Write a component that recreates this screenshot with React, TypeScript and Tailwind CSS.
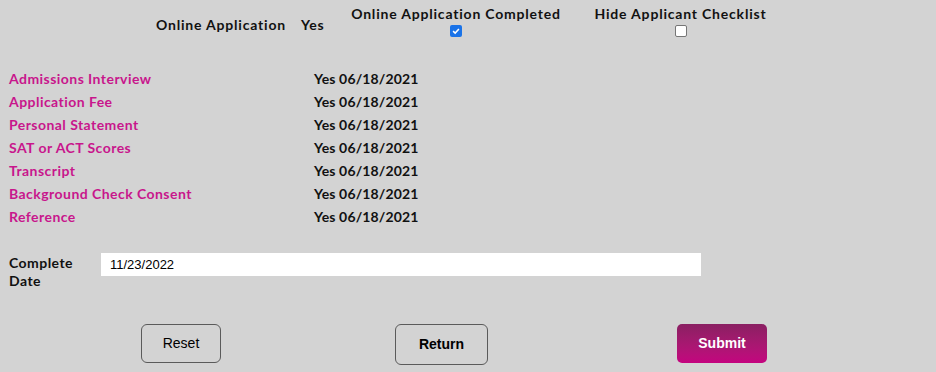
import React from "react";

const rows = [
  "Admissions Interview",
  "Application Fee",
  "Personal Statement",
  "SAT or ACT Scores",
  "Transcript",
  "Background Check Consent",
  "Reference",
];

const gothic = { fontFamily: '"URW Gothic", "Century Gothic", "Lato", "DejaVu Sans", sans-serif' };

function Check({ checked }: { checked: boolean }) {
  return checked ? (
    <span className="inline-flex h-[12px] w-[12px] items-center justify-center rounded-[2px] bg-[#1a73e8]">
      <svg viewBox="0 0 12 12" className="h-[10px] w-[10px]">
        <path d="M2.5 6.2 L5 8.5 L9.5 3.5" fill="none" stroke="white" strokeWidth="1.8" />
      </svg>
    </span>
  ) : (
    <span className="inline-block h-[12px] w-[12px] rounded-[2px] border border-[#767676] bg-white" />
  );
}

export default function App() {
  return (
    <div className="h-[372px] w-[936px] overflow-hidden bg-[#d3d3d3] text-[14px] font-bold tracking-[0.45px] text-[#111]" style={gothic}>
      <div className="flex h-[67px] items-start pt-[4px] tracking-[0.8px]">
        <div className="ml-[156px] mt-[10px] w-[145px] whitespace-nowrap">Online Application</div>
        <div className="mt-[10px] w-[48px]">Yes</div>
        <div className="flex w-[214px] flex-col items-center whitespace-nowrap">
          <div className="leading-[20px]">Online Application Completed</div>
          <div className="mt-[1px] flex"><Check checked /></div>
        </div>
        <div className="ml-[31px] flex w-[173px] flex-col items-center whitespace-nowrap">
          <div className="leading-[20px]">Hide Applicant Checklist</div>
          <div className="mt-[1px] flex"><Check checked={false} /></div>
        </div>
      </div>
      <div className="flex flex-col">
        {rows.map((r) => (
          <div key={r} className="flex h-[23px] items-center">
            <div className="ml-[9px] w-[305px] text-[#c8168c]">{r}</div>
            <div className="tracking-[0.15px]">Yes 06/18/2021</div>
          </div>
        ))}
      </div>
      <div className="mt-[25px] flex items-start">
        <div className="ml-[9px] mt-[1px] w-[92px] leading-[18px]">
          Complete
          <br />
          Date
        </div>
        <div className="flex h-[23px] w-[600px] items-center bg-white pl-[9px] text-[13px] font-normal tracking-normal text-black" style={{ fontFamily: '"Liberation Sans", Arial, sans-serif' }}>
          11/23/2022
        </div>
      </div>
      <div className="mt-[34px] flex items-start tracking-normal" style={{ fontFamily: '"Liberation Sans", Arial, sans-serif' }}>
        <button className="ml-[141px] h-[39px] w-[80px] rounded-[6px] border border-[#5a5a5a] text-[14px] font-normal text-black">
          Reset
        </button>
        <button className="ml-[174px] h-[41px] w-[93px] rounded-[6px] border border-[#5a5a5a] text-[14px] font-bold text-black">
          Return
        </button>
        <button className="ml-[189px] h-[39px] w-[90px] rounded-[5px] bg-gradient-to-b from-[#8a1f62] to-[#c4037f] text-[14px] font-bold text-white">
          Submit
        </button>
      </div>
    </div>
  );
}
